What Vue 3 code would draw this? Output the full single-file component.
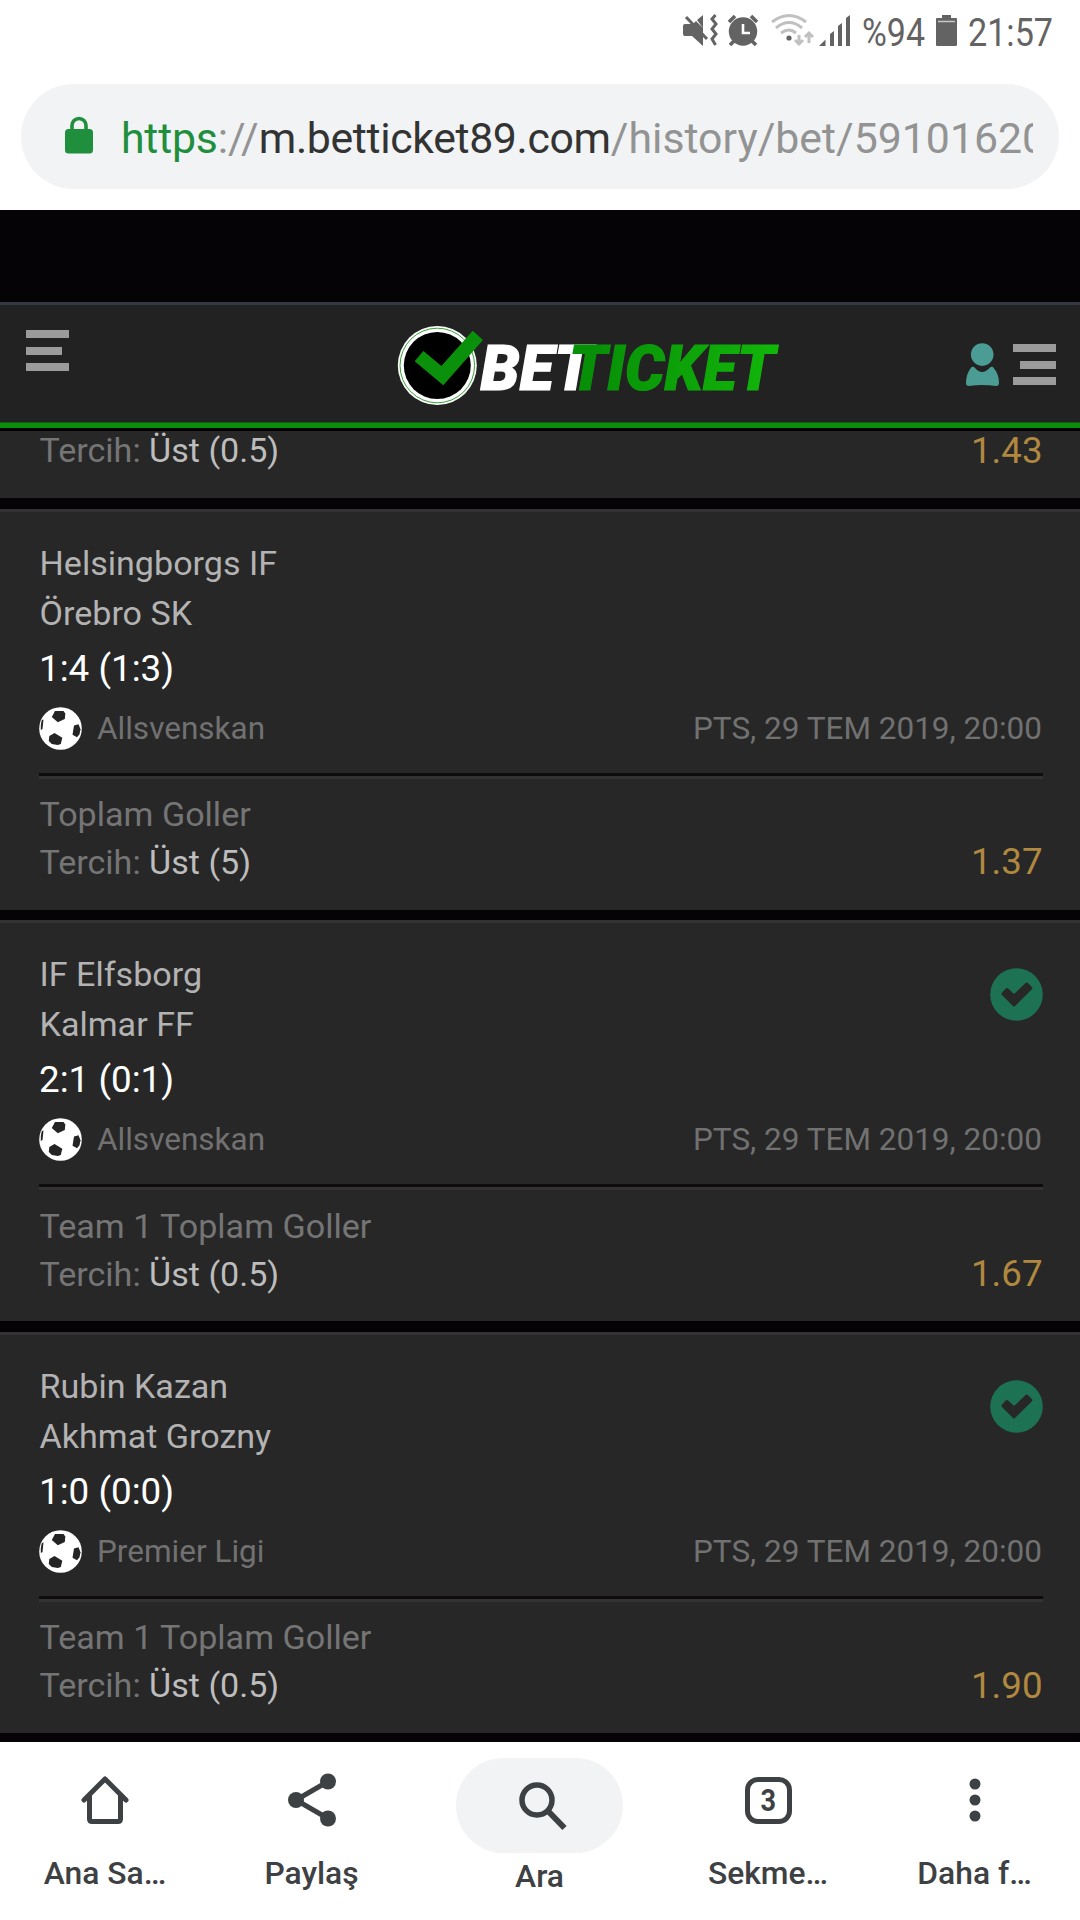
<template>
    <div class="screen">
        <div class="status-bar">
            <svg width="420" height="60" viewBox="660 0 420 60">
                <g fill="#636363">
                    <path d="M683 26q0-2 2-2h8l3-3 7 7v18l-11-10h-7q-2 0-2-2zM697 20l6-5v13z" />
                    <path d="M686 17l21 22" stroke="#636363" stroke-width="3" />
                    <path d="M715.500 15l-3.500 4 4 5-4 5 4 5-4 5 3.500 6" fill="none" stroke="#636363" stroke-width="3" />
                    <circle cx="743" cy="31.500" r="14.200" />
                    <path d="M729 22l6-6M757 22l-6-6M734 41l-4 4M752 41l4 4" stroke="#636363" stroke-width="3.600" />
                    <path d="M743 24v9h7" fill="none" stroke="#fff" stroke-width="2.600" />
                    <circle cx="789" cy="38" r="2.600" />
                    <path d="M819 46l6.500-6.500V46zM830 34l4-3v15h-4zM838 26l4-3v23h-4zM846 18l4-3v31h-4z" />
                    <path d="M942 15h9v3h5q1 0 1 1v26q0 1-1 1h-19q-1 0-1-1V19q0-1 1-1h5z" />
                </g>
                <path d="M938 21.500h17" stroke="#c8c8c8" stroke-width="1.500" />
                <g fill="none" stroke="#c0c0c0" stroke-width="3">
                    <path d="M772 22q17-13 34 0M776 28q13-11 26 0M781 33q8-6 15 0" />
                    <path d="M799 35v10M795 40l4 4 4-4M809 43V33M805 37l4-4 4 4" />
                </g>
                <text x="862" y="46" font-size="38" textLength="63" lengthAdjust="spacingAndGlyphs">%94</text>
                <text x="968" y="46" font-size="38" textLength="85" lengthAdjust="spacingAndGlyphs">21:57</text>
            </svg>
        </div>

        <div class="address-bar">
            <svg class="lock" width="28" height="38" viewBox="0 0 28 38">
                <rect y="13" width="28" height="24.500" rx="3.500" fill="#1f8e3d" />
                <path d="M7 15V9.500a7 7 0 0 1 14 0V15" fill="none" stroke="#1f8e3d" stroke-width="3.600" />
            </svg>
            <div class="url"><span class="scheme">https</span>://<span class="host">m.betticket89.com</span>/history/bet/59101620</div>
        </div>

        <div class="page">
            <div class="site-header">
                <svg class="menu" width="43" height="41" viewBox="0 0 43 41" fill="#9b9b9b">
                    <path d="M0 0h43v8H0zM0 17h36v8H0zM0 33h43v8H0z" />
                </svg>
                <svg class="logo" width="400" height="90" viewBox="390 320 400 90">
                    <defs>
                        <linearGradient id="logo-green" gradientUnits="userSpaceOnUse" x1="590" y1="0" x2="780" y2="0">
                            <stop offset="0" stop-color="#078f07" />
                            <stop offset="1" stop-color="#12b70a" />
                        </linearGradient>
                    </defs>
                    <circle cx="437.300" cy="365.500" r="39.500" fill="#fff" />
                    <circle cx="437.300" cy="365.500" r="37.300" fill="none" stroke="#35a035" />
                    <circle cx="437.300" cy="365.500" r="33.500" fill="#000" />
                    <path d="M414.700 361.300l8.700-10.300 18 15 31.300-35.300L483 340l-39.700 45.300z" fill="#0a900a" />
                    <text class="brand" x="480.500" y="389.500" fill="#fff" stroke="#fff" textLength="112" lengthAdjust="spacingAndGlyphs">BET</text>
                    <text class="brand" x="569" y="389.500" fill="url(#logo-green)" stroke="url(#logo-green)" textLength="206" lengthAdjust="spacingAndGlyphs">TICKET</text>
                </svg>
                <svg class="account" width="92" height="44" viewBox="965 343 92 44">
                    <g fill="#4a9c94">
                        <circle cx="982.200" cy="354.600" r="11.300" />
                        <path d="M971.500 367q2-1 3.500 1 7 8 14.500 0 1.500-2 3.500-1 6 7 6 16 0 3-3 3-14-2-27 0-3 0-3-3 0-9 5.500-16z" />
                    </g>
                    <path d="M1013 344h43v8h-43zM1020 361h36v8h-36zM1013 377h43v8h-43z" fill="#9b9b9b" />
                </svg>
            </div>

            <div class="bets">
                <div class="bet clipped">
                    <div class="pick-row">
                        <div class="pick">Tercih: <span>Üst (0.5)</span></div>
                        <div class="odds">1.43</div>
                    </div>
                </div>

                <div v-for="bet in bets" :key="bet.home" class="bet">
                    <div class="top">
                        <div>
                            <div class="team">{{ bet.home }}</div>
                            <div class="team">{{ bet.away }}</div>
                            <div class="score">{{ bet.score }}</div>
                        </div>
                        <svg v-if="bet.won" class="won" width="53" height="53" viewBox="0 0 53 53">
                            <circle cx="26.500" cy="26.500" r="26.300" fill="#1c7252" />
                            <path d="M12 24.500l3.800-4q1.200-1 2.300 0l6 5.500 11.500-11q1.200-1 2.300 0l4 4q1 1.200 0 2.300L25 38q-1 1-2 0L12 27q-1-1.300 0-2.500z" fill="#272727" />
                        </svg>
                    </div>
                    <div class="meta">
                        <svg width="43" height="43" viewBox="0 0 43 43">
                            <circle cx="21.500" cy="21.500" r="21.300" fill="#fff" />
                            <g fill="#242424">
                                <path d="M16 4h8.500l1.800 2.500-.5 5.500-7 3.300-6-5.300z" />
                                <path d="M15.500 26l7.800 4.800-1.500 6.200-3 1-6-1-3-3 .5-5z" />
                                <path d="M35 18.500l4.500-1.200 2 5-1 5-2.500 3-4.500-2.500z" />
                                <path d="M2.800 13l1.700-.5-1 9.500-1.700 1q-.5-5 1-10z" />
                            </g>
                        </svg>
                        <div class="league">{{ bet.league }}</div>
                        <div class="date">PTS, 29 TEM 2019, 20:00</div>
                    </div>
                    <div class="divider"></div>
                    <div class="market">{{ bet.market }}</div>
                    <div class="pick-row">
                        <div class="pick">Tercih: <span>{{ bet.pick }}</span></div>
                        <div class="odds">{{ bet.odds }}</div>
                    </div>
                </div>
            </div>
        </div>

        <div class="toolbar">
            <div class="tool">
                <div class="icon">
                    <svg width="54" height="54" viewBox="0 0 54 54" fill="none" stroke="#3e4144" stroke-width="5" stroke-linecap="round" stroke-linejoin="round">
                        <path d="M6 27L27 6l21 21M11.500 23v23q0 2.500 2.500 2.500h26q2.500 0 2.500-2.500V23" />
                    </svg>
                </div>
                <div class="label">Ana Sa…</div>
            </div>
            <div class="tool">
                <div class="icon">
                    <svg width="54" height="54" viewBox="0 0 54 54" fill="#3e4144">
                        <path d="M43 8.500L11 27l32 18.500" fill="none" stroke="#3e4144" stroke-width="5" />
                        <circle cx="11" cy="27" r="8" />
                        <circle cx="43" cy="8.500" r="8" />
                        <circle cx="43" cy="45.500" r="8" />
                    </svg>
                </div>
                <div class="label">Paylaş</div>
            </div>
            <div class="tool search">
                <div class="pill">
                    <svg width="50" height="50" viewBox="0 0 50 50" fill="none" stroke="#3e4144">
                        <circle cx="19" cy="19" r="15" stroke-width="5.500" />
                        <path d="M29.500 29.500L46.500 47" stroke-width="6" />
                    </svg>
                </div>
                <div class="label">Ara</div>
            </div>
            <div class="tool">
                <div class="icon">
                    <svg width="47" height="47" viewBox="0 0 47 47">
                        <rect x="2.500" y="2.500" width="42" height="42" rx="10.500" fill="none" stroke="#3e4144" stroke-width="5" />
                        <text class="count" x="15.500" y="34" textLength="15.500" lengthAdjust="spacingAndGlyphs">3</text>
                    </svg>
                </div>
                <div class="label">Sekme…</div>
            </div>
            <div class="tool">
                <div class="icon">
                    <svg width="12" height="44" viewBox="0 0 12 44" fill="#3e4144">
                        <circle cx="6" cy="6" r="5.500" />
                        <circle cx="6" cy="22" r="5.500" />
                        <circle cx="6" cy="38" r="5.500" />
                    </svg>
                </div>
                <div class="label">Daha f…</div>
            </div>
        </div>
    </div>
</template>

<script setup>
const bets = [
    {
        home: 'Helsingborgs IF',
        away: 'Örebro SK',
        score: '1:4 (1:3)',
        league: 'Allsvenskan',
        market: 'Toplam Goller',
        pick: 'Üst (5)',
        odds: '1.37',
        won: false,
    },
    {
        home: 'IF Elfsborg',
        away: 'Kalmar FF',
        score: '2:1 (0:1)',
        league: 'Allsvenskan',
        market: 'Team 1 Toplam Goller',
        pick: 'Üst (0.5)',
        odds: '1.67',
        won: true,
    },
    {
        home: 'Rubin Kazan',
        away: 'Akhmat Grozny',
        score: '1:0 (0:0)',
        league: 'Premier Ligi',
        market: 'Team 1 Toplam Goller',
        pick: 'Üst (0.5)',
        odds: '1.90',
        won: true,
    },
]
</script>

<style>
body {
    margin: 0;
    background: #fff;
}
</style>

<style scoped>
.screen {
    width: 1080px;
    height: 1920px;
    display: flex;
    flex-direction: column;
    overflow: hidden;
    background: #fff;
    font-family: Roboto, sans-serif;
}

svg {
    display: block;
    flex: none;
}

.status-bar {
    height: 84px;
    display: flex;
    justify-content: flex-end;
    fill: #636363;
}

.address-bar {
    height: 105px;
    margin: 0 21px 21px;
    padding: 0 26px 0 44px;
    box-sizing: border-box;
    border-radius: 53px;
    background: #f1f3f5;
    display: flex;
    align-items: center;
    flex: none;
}

.lock {
    margin-bottom: 4px;
}

.url {
    flex: 1;
    margin: 2px 0 0 28px;
    overflow: hidden;
    white-space: nowrap;
    font-size: 42.800px;
    line-height: 60px;
    color: #939393;
}

.scheme {
    color: #1f8e3d;
    letter-spacing: -0.200px;
}

.host {
    color: #333;
    letter-spacing: -0.350px;
}

.page {
    height: 1532px;
    flex: none;
    background: #050305;
    overflow: hidden;
}

.site-header {
    height: 129px;
    margin-top: 92px;
    padding: 0 23px 0 26px;
    box-sizing: border-box;
    border-top: 3px solid #343840;
    border-bottom: 3px solid #000;
    box-shadow: inset 0 -5.500px #0b8f0b;
    background: #222;
    display: flex;
    align-items: flex-start;
}

.menu {
    margin-top: 25px;
}

.logo {
    margin: 15px 0 0 321px;
}

.brand {
    font-size: 62px;
    font-weight: 900;
    font-style: italic;
    stroke-width: 1.200px;
}

.account {
    margin: 38px 0 0 auto;
}

.bets {
    display: flex;
    flex-direction: column;
    gap: 10.600px;
}

.bet {
    height: 401px;
    flex: none;
    padding: 26px 37px 0 39px;
    box-sizing: border-box;
    border-top: 3px solid #333;
    background: #272727;
}

.bet.clipped {
    height: 67.200px;
    padding-top: 0;
    padding-bottom: 24px;
    border-top: 0;
    display: flex;
    flex-direction: column;
    justify-content: flex-end;
}

.top {
    display: flex;
    justify-content: space-between;
}

.team {
    padding-left: 0.500px;
    font-size: 34.100px;
    line-height: 50px;
    color: #b3b3b3;
}

.score {
    margin-top: 4px;
    font-size: 36.800px;
    line-height: 54px;
    color: #fff;
}

.won {
    margin-top: 19px;
}

.meta {
    height: 44px;
    margin-top: 10.600px;
    display: flex;
    align-items: center;
    font-size: 31.500px;
    color: #717171;
}

.league {
    margin-left: 15px;
}

.date {
    margin: 0 1px 0 auto;
}

.divider {
    height: 3px;
    margin: 22.400px 0 11.200px;
    border-bottom: 3px solid #333;
    background: #0f0c0d;
}

.market,
.pick {
    padding-left: 0.500px;
    font-size: 34.100px;
    line-height: 48px;
    color: #757575;
}

.pick span {
    color: #bdbdbd;
}

.pick-row {
    display: flex;
    align-items: center;
    justify-content: space-between;
    height: 48px;
}

.odds {
    margin-right: 0.500px;
    font-size: 36.700px;
    color: #b0883f;
}

.toolbar {
    flex: 1;
    display: grid;
    grid-template-columns: 210px 203px 253px 204px 209px;
    color: #3e4144;
}

.tool {
    display: flex;
    flex-direction: column;
    align-items: center;
}

.icon {
    height: 54px;
    margin-top: 31px;
    display: flex;
    align-items: center;
}

.label {
    margin-top: 26px;
    font-size: 31.800px;
    font-weight: 500;
    line-height: 40px;
}

.pill {
    width: 167px;
    height: 95px;
    margin-top: 16px;
    padding-left: 6px;
    box-sizing: border-box;
    border-radius: 48px;
    background: #f1f3f5;
    display: flex;
    align-items: center;
    justify-content: center;
}

.search .label {
    margin-top: 3px;
}

.count {
    fill: #3e4144;
    font-size: 32px;
    font-weight: 700;
}
</style>
